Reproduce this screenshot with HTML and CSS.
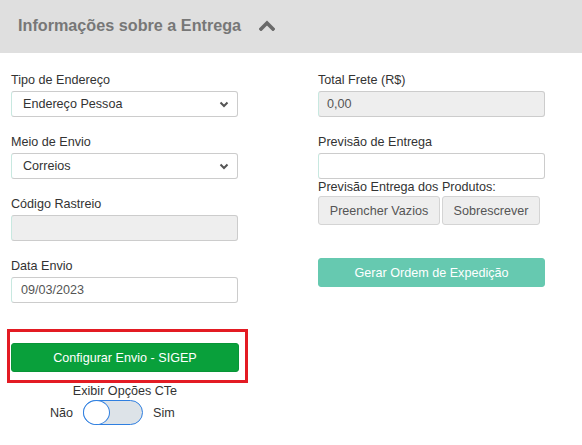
FILE: index.html
```html
<!DOCTYPE html>
<html lang="pt-BR">
<head>
<meta charset="utf-8">
<link rel="stylesheet" href="styles.css">
</head>
<body>
<div class="panel-heading">
  <span class="title">Informações sobre a Entrega</span>
  <svg class="chev-up" width="16" height="11" viewBox="0 0 16 11"><polyline points="2,9 8,3 14,9" fill="none" stroke="#6a6a6a" stroke-width="3.6" stroke-linecap="square"/></svg>
</div>
<div class="form">
  <div class="col left">
    <div class="field">
      <label class="lbl">Tipo de Endereço</label>
      <div class="ctrl select"><span>Endereço Pessoa</span><svg width="10" height="7" viewBox="0 0 10 7"><polyline points="1.5,1.5 5,5 8.5,1.5" fill="none" stroke="#555" stroke-width="2"/></svg></div>
    </div>
    <div class="field">
      <label class="lbl">Meio de Envio</label>
      <div class="ctrl select"><span>Correios</span><svg width="10" height="7" viewBox="0 0 10 7"><polyline points="1.5,1.5 5,5 8.5,1.5" fill="none" stroke="#555" stroke-width="2"/></svg></div>
    </div>
    <div class="field">
      <label class="lbl">Código Rastreio</label>
      <div class="ctrl input disabled"></div>
    </div>
    <div class="field">
      <label class="lbl">Data Envio</label>
      <div class="ctrl input">09/03/2023</div>
    </div>
    <div class="highlight">
      <button class="btn btn-green">Configurar Envio - SIGEP</button>
    </div>
    <div class="cte">
      <div class="cte-label">Exibir Opções CTe</div>
      <div class="cte-row">
        <span>Não</span>
        <span class="toggle"><span class="knob"></span></span>
        <span>Sim</span>
      </div>
    </div>
  </div>
  <div class="col right">
    <div class="field">
      <label class="lbl">Total Frete (R$)</label>
      <div class="ctrl input disabled">0,00</div>
    </div>
    <div class="field tight">
      <label class="lbl">Previsão de Entrega</label>
      <div class="ctrl input"></div>
    </div>
    <label class="lbl">Previsão Entrega dos Produtos:</label>
    <div class="btn-group">
      <button class="btn btn-default b1">Preencher Vazios</button>
      <button class="btn btn-default b2">Sobrescrever</button>
    </div>
    <button class="btn btn-teal">Gerar Ordem de Expedição</button>
  </div>
</div>
</body>
</html>
```
FILE: styles.css
```css
* { box-sizing: border-box; }
body {
  margin: 0;
  background: #fff;
  font-family: "Liberation Sans", Arial, sans-serif;
  font-size: 12.6px;
  color: #333;
}
.panel-heading {
  height: 53px;
  background: #dfdfdf;
  display: flex;
  align-items: center;
  padding: 0 0 2px 18px;
}
.title {
  font-size: 16.2px;
  font-weight: bold;
  color: #777;
}
.chev-up { margin-left: 18px; }
.form {
  display: grid;
  grid-template-columns: 307px 1fr;
  padding-top: 19px;
}
.col { padding-left: 11px; }
.field { margin-bottom: 17px; }
.field.tight { margin-bottom: 0; }
.lbl {
  display: block;
  line-height: 16px;
  margin-bottom: 3px;
  color: #333;
}
.right > .lbl { margin-bottom: 1px; }
.ctrl {
  width: 227px;
  height: 26px;
  border: 1px solid #ccc;
  border-left-color: #c8e8e0;
  border-radius: 3px;
  background: #fff;
  color: #555;
  display: flex;
  align-items: center;
}
.select {
  padding: 0 8px 0 11px;
  justify-content: space-between;
  color: #333;
}
.input { padding-left: 9px; }
.input.disabled { background: #eee; padding-left: 8px; }
.btn {
  font-family: inherit;
  font-size: 12.6px;
  border-radius: 3px;
  cursor: pointer;
  display: flex;
  align-items: center;
  justify-content: center;
  padding: 0;
}
.highlight {
  width: 241px;
  margin-left: -4px;
  margin-top: 26px;
  border: 3px solid #e31b23;
  padding: 11px 6px 8px 1px;
}
.btn-green {
  width: 228px;
  height: 29px;
  background: #09a03b;
  border: 1px solid #089537;
  color: #fff;
}
.cte { width: 250px; margin-left: -11px; }
.cte-label {
  text-align: center;
  line-height: 16px;
  color: #333;
}
.cte-row {
  display: flex;
  align-items: center;
  padding-left: 50px;
  margin-top: 1px;
}
.toggle {
  width: 60px;
  height: 25px;
  border: 1.5px solid #2f7fe0;
  border-radius: 13px;
  background: #dde3e8;
  margin: 0 10px 0 10px;
  position: relative;
}
.knob {
  position: absolute;
  left: -1.5px;
  top: -1.5px;
  width: 27px;
  height: 25px;
  border-radius: 50%;
  background: #fff;
  border: 1.5px solid #2f7fe0;
}
.btn-group {
  display: flex;
  gap: 2px;
}
.btn-default {
  height: 29px;
  background: #eee;
  border: 1px solid #d4d4d4;
  color: #555;
}
.b1 { width: 122px; }
.b2 { width: 98px; }
.btn-teal {
  margin-top: 33px;
  width: 227px;
  height: 29px;
  background: #66c9b0;
  border: 1px solid #66c9b0;
  color: #fff;
}
```
